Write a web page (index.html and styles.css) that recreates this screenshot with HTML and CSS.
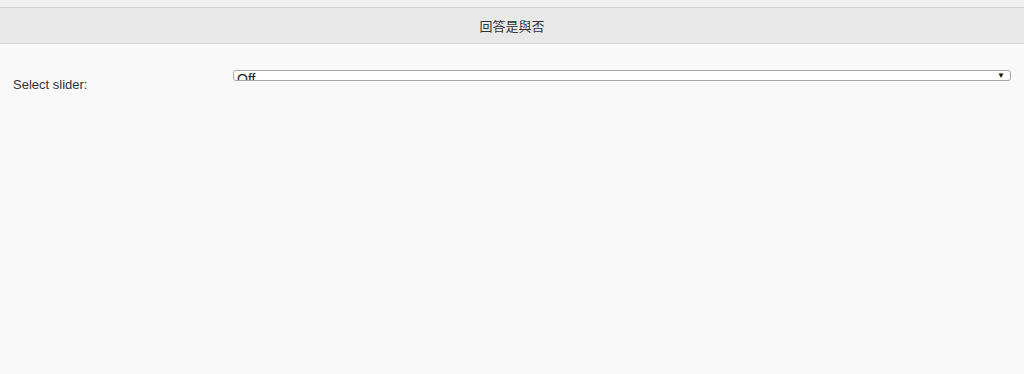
FILE: index.html
```html
<!DOCTYPE html>
<html lang="zh-Hant">
<head>
    <meta charset="UTF-8">
    <meta name="viewport" content="width=device-width, initial-scale=1.0">
    <title>回答是與否</title>
    <link rel="stylesheet" href="styles.css">
</head>
<body>
    <div class="topbar"></div>
    <div class="header">
        <h1>回答是與否</h1>
    </div>
    <div class="content">
        <div class="field">
            <label class="label">Select slider:</label>
            <div class="select">
                <span class="value">Off</span>
                <span class="arrow">&#9660;</span>
            </div>
        </div>
    </div>
</body>
</html>
```

FILE: styles.css
```css
html, body {
    margin: 0;
    padding: 0;
    height: 100%;
}
body {
    font-family: "Liberation Sans", Arial, "Noto Sans CJK TC", sans-serif;
    color: #333;
    background: #f9f9f9;
}
.topbar {
    height: 7px;
    background: #f1f1f1;
    border-bottom: 1px solid #d2d2d2;
}
.header {
    height: 35px;
    background: #e8e8e8;
    border-bottom: 1px solid #dadada;
    display: flex;
    align-items: center;
    justify-content: center;
}
.header h1 {
    margin: 0;
    font-size: 13px;
    font-weight: normal;
    color: #333;
}
.content {
    padding: 26px 13px 0 13px;
}
.field {
    display: flex;
    align-items: flex-start;
}
.label {
    width: 220px;
    font-size: 13px;
    padding-top: 7px;
}
.select {
    flex: 1;
    height: 9px;
    border: 1px solid #a6a6a6;
    border-radius: 3px;
    background: #fff;
    position: relative;
    overflow: hidden;
}
.value {
    position: absolute;
    left: 3px;
    top: 1px;
    font-size: 14px;
    line-height: 15px;
    color: #222;
}
.arrow {
    position: absolute;
    right: 5px;
    top: 1px;
    font-size: 8px;
    line-height: 7px;
    color: #111;
}
```
